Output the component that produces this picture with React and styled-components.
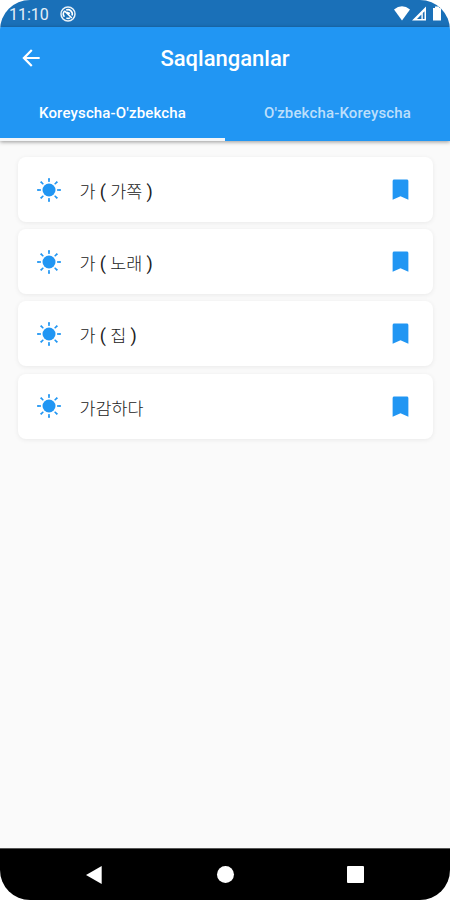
import React, { useState } from "react";
import styled, { createGlobalStyle } from "styled-components";

const tabs = ["Koreyscha-O'zbekcha", "O'zbekcha-Koreyscha"];

const words = [
  { korean: "가", note: "가쪽" },
  { korean: "가", note: "노래" },
  { korean: "가", note: "집" },
  { korean: "가감하다" },
];

const rays = [0, 45, 90, 135, 180, 225, 270, 315];

const SunIcon = () => (
  <svg width="24" height="24" viewBox="0 0 24 24" fill="#2196f3">
    <circle cx="12" cy="12" r="6.5" />
    {rays.map((angle) => (
      <path
        key={angle}
        d="M11 0.2h2l-0.3 3.8h-1.4z"
        transform={`rotate(${angle} 12 12)`}
      />
    ))}
  </svg>
);

const BookmarkIcon = () => (
  <svg width="27" height="27" viewBox="0 0 24 24" fill="#2196f3">
    <path d="M17.6 3H6.4C5.6 3 5 3.6 5 4.4V21l7-3 7 3V4.4c0-.8-.6-1.4-1.4-1.4z" />
  </svg>
);

const BackIcon = () => (
  <svg width="26" height="26" viewBox="0 0 24 24" fill="#fff">
    <path d="M20 11H7.83l5.59-5.59L12 4l-8 8 8 8 1.41-1.41L7.83 13H20v-2z" />
  </svg>
);

const SyncIcon = () => (
  <svg width="16" height="16" viewBox="0 0 16 16" fill="none" stroke="#fff">
    <circle cx="8" cy="8" r="7" strokeWidth="1.5" strokeOpacity="0.9" />
    <path
      d="M4.4 10.8A4.4 4.4 0 0 1 4.6 5M6.2 4a4.4 4.4 0 0 1 5.9 5.4M10 11.9a4.2 4.2 0 0 1-3.6.2"
      strokeWidth="1.6"
    />
    <path d="M4.4 4.8l7.4 7.2M6.6 6.2l3.4 1.2" strokeWidth="1.6" />
  </svg>
);

const StatusIcons = () => (
  <svg width="58" height="27" viewBox="0 0 58 27" fill="#fff">
    <path d="M2 9.5Q10 3.2 18 9.5L10 20.5z" />
    <path
      fillRule="evenodd"
      d="M20 20.5L34 6.5v14zM25 18.9h4.4v-4.4z M30.8 13v5.9h1.7v-7.6z"
    />
    <path d="M41 8h2V6.5h4V8h2v12.5h-8z" />
  </svg>
);

const App = () => {
  const [active, setActive] = useState(0);

  return (
    <Screen>
      <GlobalStyle />
      <StatusBar>
        <Time>11:10</Time>
        <SyncIcon />
        <Spacer />
        <StatusIcons />
      </StatusBar>
      <Header>
        <TitleRow>
          <BackButton aria-label="Back">
            <BackIcon />
          </BackButton>
          <Title>Saqlanganlar</Title>
        </TitleRow>
        <Tabs>
          {tabs.map((tab, index) => (
            <Tab
              key={tab}
              $active={index === active}
              onClick={() => setActive(index)}
            >
              {tab}
            </Tab>
          ))}
        </Tabs>
      </Header>
      <List>
        {words.map(({ korean, note }, index) => (
          <Card key={index}>
            <SunIcon />
            <Word>
              {korean}
              {note && (
                <>
                  {" "}
                  <Paren>(</Paren> {note} <Paren>)</Paren>
                </>
              )}
            </Word>
            <BookmarkIcon />
          </Card>
        ))}
      </List>
      <NavBar>
        <svg width="18" height="20" viewBox="0 0 18 20" fill="#fff">
          <path d="M1 10L16.7 1v18z" />
        </svg>
        <HomeDot />
        <RecentSquare />
      </NavBar>
    </Screen>
  );
};

const GlobalStyle = createGlobalStyle`
  * {
    box-sizing: border-box;
  }

  body {
    margin: 0;
    background: #fff;
    font-family: Roboto, "Noto Sans CJK KR", sans-serif;
  }

  svg {
    display: block;
    flex-shrink: 0;
  }

  button {
    border: 0;
    padding: 0;
    background: none;
    color: inherit;
    font-family: inherit;
    cursor: pointer;
  }
`;

const Screen = styled.div`
  width: 450px;
  height: 900px;
  display: flex;
  flex-direction: column;
  overflow: hidden;
  border-radius: 30px;
  background: #fafafa;
`;

const StatusBar = styled.div`
  height: 27px;
  display: flex;
  align-items: center;
  padding-left: 9px;
  background: #1a70b8;
`;

const Time = styled.span`
  width: 51px;
  padding-top: 1px;
  color: #e4eff8;
  font-size: 16px;
`;

const Spacer = styled.div`
  flex: 1;
`;

const Header = styled.header`
  height: 114px;
  flex-shrink: 0;
  display: flex;
  flex-direction: column;
  background: #2196f3;
  color: #fff;
  box-shadow: 0 1px 4px rgba(0, 0, 0, 0.4);
`;

const TitleRow = styled.div`
  height: 61px;
  display: grid;
  grid-template-columns: 62px 1fr 62px;
  align-items: center;
`;

const BackButton = styled.button`
  display: flex;
  justify-content: center;
`;

const Title = styled.h1`
  margin: 0;
  padding-top: 1px;
  text-align: center;
  font-size: 22px;
  font-weight: 500;
`;

const Tabs = styled.div`
  flex: 1;
  display: flex;
`;

const Tab = styled.button`
  flex: 1;
  font-size: 15px;
  font-weight: 500;
  letter-spacing: 0.15px;
  color: ${({ $active }) => ($active ? "#fff" : "#bcdffb")};
  border-bottom: 3px solid ${({ $active }) => ($active ? "#f4f6f8" : "#2196f3")};
`;

const List = styled.main`
  flex: 1;
  display: flex;
  flex-direction: column;
  gap: 7.1px;
  padding: 16.3px 17px 0 18px;
`;

const Card = styled.div`
  height: 65px;
  display: flex;
  align-items: center;
  padding: 0 19.5px 0 18.5px;
  border-radius: 8px;
  background: #fff;
  box-shadow: 0 1px 5px rgba(0, 0, 0, 0.07);
`;

const Word = styled.span`
  flex: 1;
  padding: 2px 0 0 19px;
  color: #222;
  font-size: 17.4px;
  font-weight: 300;
`;

const Paren = styled.span`
  color: #222;
  font-size: 18px;
  font-weight: 400;
`;

const NavBar = styled.nav`
  height: 52px;
  display: flex;
  align-items: center;
  justify-content: space-between;
  padding: 0 86px 0 85px;
  border-top: 1px solid #555;
  background: #000;
`;

const HomeDot = styled.div`
  width: 17px;
  height: 17px;
  border-radius: 50%;
  background: #fff;
`;

const RecentSquare = styled.div`
  width: 17px;
  height: 17px;
  border-radius: 1px;
  background: #fff;
`;

export default App;
